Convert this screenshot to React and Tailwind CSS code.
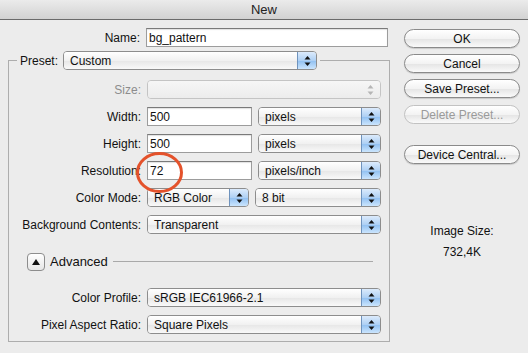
import React from "react";

const BTN =
  "flex h-[19px] w-[116px] items-center justify-center rounded-full border border-[#8a8a8a] bg-[linear-gradient(to_bottom,#ffffff_0%,#f3f3f3_50%,#e4e4e4_51%,#fafafa_100%)] shadow-[0_1px_1px_rgba(0,0,0,0.15)]";

// little up/down arrows used by the popup menus
const Arrows = ({ color = "#111" }) => (
  <svg width="7" height="12" viewBox="0 0 7 12">
    <polygon points="3.5,1 6.5,4.5 0.5,4.5" fill={color} />
    <polygon points="0.5,7.5 6.5,7.5 3.5,11" fill={color} />
  </svg>
);

const Popup = ({ value, width, disabled }) => (
  <div
    className={`flex h-[19px] ${width} overflow-hidden rounded-[4px] border ${
      disabled ? "border-[#c4c4c4]" : "border-[#8d8d8d]"
    }`}
  >
    <div
      className={`flex flex-1 items-center pl-[6px] ${
        disabled
          ? "bg-[linear-gradient(to_bottom,#f6f6f6,#ececec)]"
          : "bg-[linear-gradient(to_bottom,#ffffff_0%,#f1f1f1_50%,#e6e6e6_51%,#f9f9f9_100%)]"
      }`}
    >
      {value}
    </div>
    {disabled ? (
      <div className="flex w-[19px] items-center justify-center bg-[linear-gradient(to_bottom,#f6f6f6,#ececec)]">
        <Arrows color="#b5b5b5" />
      </div>
    ) : (
      <div className="flex w-[19px] items-center justify-center border-l border-[#6f93bd] bg-[linear-gradient(to_bottom,#dcebfc_0%,#aed0f4_50%,#8fbff1_51%,#cbe5fd_100%)]">
        <Arrows />
      </div>
    )}
  </div>
);

const Field = ({ value, width }) => (
  <div
    className={`flex h-[19px] ${width} items-center border border-[#9c9c9c] border-t-[#7a7a7a] bg-white pl-[2px] shadow-[inset_0_1px_1px_rgba(0,0,0,0.12)]`}
  >
    {value}
  </div>
);

const Row = ({ label, dim, children, className = "" }) => (
  <div className={`flex h-[19px] items-center ${className}`}>
    <div className={`w-[132px] text-right ${dim ? "text-[#8c8c8c]" : ""}`}>{label}</div>
    <div className="ml-[6px] flex gap-[6px]">{children}</div>
  </div>
);

export default function App() {
  return (
    <div className="relative h-[353px] w-[528px] overflow-hidden bg-[#ececec] font-['Liberation_Sans',Arial,sans-serif] text-[12px] text-[#111]">
      {/* title bar */}
      <div className="flex h-[20px] items-center justify-center border-b border-[#6b6b6b] bg-[linear-gradient(to_bottom,#ebebeb,#d2d2d2)] text-[13px] text-[#222]">
        New
      </div>

      <div className="flex pt-[8px]">
        {/* left side */}
        <div className="w-[392px]">
          <div className="flex h-[19px] items-center">
            <div className="w-[140px] text-right">Name:</div>
            <div className="ml-[6px]">
              <Field value="bg_pattern" width="w-[242px]" />
            </div>
          </div>

          <fieldset className="ml-[8px] mt-[4px] w-[382px] border border-[#adadad] p-0">
            <legend className="ml-[8px] px-[3px]">
              <div className="flex items-center gap-[5px]">
                <span>Preset:</span>
                <Popup value="Custom" width="w-[254px]" />
              </div>
            </legend>

            <div className="flex flex-col pb-[7px] pt-[10px]">
              <div className="flex flex-col gap-[8px]">
                <Row label="Size:" dim>
                  <Popup value="" width="w-[234px]" disabled />
                </Row>
                <Row label="Width:">
                  <Field value="500" width="w-[105px]" />
                  <Popup value="pixels" width="w-[123px]" />
                </Row>
                <Row label="Height:">
                  <Field value="500" width="w-[105px]" />
                  <Popup value="pixels" width="w-[123px]" />
                </Row>
                <Row label="Resolution:">
                  <Field value="72" width="w-[105px]" />
                  <Popup value="pixels/inch" width="w-[123px]" />
                </Row>
                <Row label="Color Mode:">
                  <Popup value="RGB Color" width="w-[102px]" />
                  <Popup value="8 bit" width="w-[126px]" />
                </Row>
                <Row label="Background Contents:">
                  <Popup value="Transparent" width="w-[234px]" />
                </Row>
              </div>

              {/* advanced disclosure */}
              <div className="mt-[18px] flex h-[19px] items-center pl-[18px] pr-[16px]">
                <div className="flex h-[18px] w-[18px] items-center justify-center rounded-[4px] border border-[#8d8d8d] bg-[linear-gradient(to_bottom,#ffffff,#e6e6e6)]">
                  <svg width="8" height="6" viewBox="0 0 8 6">
                    <polygon points="4,0 8,6 0,6" fill="#111" />
                  </svg>
                </div>
                <span className="ml-[5px] text-[13px]">Advanced</span>
                <div className="ml-[5px] h-px flex-1 bg-[#a9a9a9]" />
              </div>

              <Row label="Color Profile:" className="mt-[17px]">
                <Popup value="sRGB IEC61966-2.1" width="w-[234px]" />
              </Row>
              <Row label="Pixel Aspect Ratio:" className="mt-[8px]">
                <Popup value="Square Pixels" width="w-[234px]" />
              </Row>
            </div>
          </fieldset>
        </div>

        {/* right side */}
        <div className="ml-[12px] flex w-[116px] flex-col items-center">
          <div className={`${BTN} mt-[1px] border-[#4f77a6] bg-[linear-gradient(to_bottom,#d8eafc_0%,#a3cdf5_50%,#7fb8f0_51%,#c5e4fd_100%)]`}>
            OK
          </div>
          <div className={`${BTN} mt-[6px]`}>Cancel</div>
          <div className={`${BTN} mt-[6px]`}>Save Preset...</div>
          <div className={`${BTN} mt-[7px] border-[#c2c2c2] text-[#9a9a9a] shadow-none`}>Delete Preset...</div>
          <div className={`${BTN} mt-[21px]`}>Device Central...</div>

          <div className="mt-[60px] leading-[15px]">Image Size:</div>
          <div className="mt-[6px] leading-[15px]">732,4K</div>
        </div>
      </div>

      {/* red annotation circle */}
      <svg className="absolute left-[134px] top-[150px]" width="52" height="46" viewBox="0 0 52 46">
        <ellipse cx="25.5" cy="22.5" rx="22" ry="19" fill="none" stroke="#e4522b" strokeWidth="3" />
      </svg>
    </div>
  );
}
